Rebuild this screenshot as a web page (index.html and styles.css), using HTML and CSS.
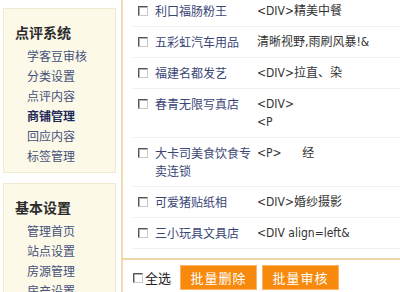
FILE: index.html
```html
<!DOCTYPE html>
<html lang="zh-CN">
<head>
    <meta charset="UTF-8">
    <title>商铺管理</title>
    <link rel="stylesheet" href="styles.css">
</head>
<body>
    <div class="admin">
        <div class="sidebar">
            <div class="menu-box">
                <h3>点评系统</h3>
                <ul>
                    <li><a href="#">学客豆审核</a></li>
                    <li><a href="#">分类设置</a></li>
                    <li><a href="#">点评内容</a></li>
                    <li><a href="#" class="current">商铺管理</a></li>
                    <li><a href="#">回应内容</a></li>
                    <li><a href="#">标签管理</a></li>
                </ul>
            </div>
            <div class="menu-box">
                <h3>基本设置</h3>
                <ul>
                    <li><a href="#">管理首页</a></li>
                    <li><a href="#">站点设置</a></li>
                    <li><a href="#">房源管理</a></li>
                    <li><a href="#">房产设置</a></li>
                </ul>
            </div>
        </div>

        <div class="main">
            <div class="shop-list">
                <div class="shop-row">
                    <span class="check"></span>
                    <span class="shop-name">利口福肠粉王</span>
                    <span class="shop-desc">&lt;DIV&gt;精美中餐</span>
                </div>
                <div class="shop-row">
                    <span class="check"></span>
                    <span class="shop-name">五彩虹汽车用品</span>
                    <span class="shop-desc">清晰视野,雨刷风暴!&amp;</span>
                </div>
                <div class="shop-row">
                    <span class="check"></span>
                    <span class="shop-name">福建名都发艺</span>
                    <span class="shop-desc">&lt;DIV&gt;拉直、染</span>
                </div>
                <div class="shop-row">
                    <span class="check"></span>
                    <span class="shop-name">春青无限写真店</span>
                    <span class="shop-desc">&lt;DIV&gt;<br>&lt;P</span>
                </div>
                <div class="shop-row">
                    <span class="check"></span>
                    <span class="shop-name">大卡司美食饮食专卖连锁</span>
                    <span class="shop-desc">&lt;P&gt;&nbsp;&nbsp;&nbsp;&nbsp;&nbsp;&nbsp;经</span>
                </div>
                <div class="shop-row">
                    <span class="check"></span>
                    <span class="shop-name">可爱猪贴纸相</span>
                    <span class="shop-desc">&lt;DIV&gt;婚纱摄影</span>
                </div>
                <div class="shop-row">
                    <span class="check"></span>
                    <span class="shop-name">三小玩具文具店</span>
                    <span class="shop-desc">&lt;DIV align=left&amp;</span>
                </div>
            </div>

            <div class="actions">
                <label class="select-all"><span class="check"></span>全选</label>
                <button type="button">批量删除</button>
                <button type="button">批量审核</button>
            </div>
        </div>
    </div>
</body>
</html>
```

FILE: styles.css
```css
* {
    margin: 0;
    padding: 0;
    box-sizing: border-box;
}

body {
    background: #fff;
    font-family: "Noto Sans CJK SC", sans-serif;
    font-size: 12px;
    color: #333;
    overflow: hidden;
}

.admin {
    display: flex;
    align-items: flex-start;
}

/* left menu */
.sidebar {
    width: 121px;
    flex-shrink: 0;
    padding: 8px 0 0 3px;
}

.menu-box {
    width: 113px;
    background: #fcf9e9;
    border: 1px solid #f1ead0;
    padding: 11px 0 6px;
    margin-bottom: 10px;
}

.menu-box h3 {
    font-size: 14px;
    line-height: 24px;
    font-weight: bold;
    color: #2b2b2b;
    padding-left: 11px;
    margin-bottom: 2px;
}

.menu-box ul {
    list-style: none;
}

.menu-box li {
    line-height: 20px;
    padding-left: 23px;
}

.menu-box a {
    color: #45527a;
    text-decoration: none;
}

.menu-box a.current {
    color: #1e2a58;
    font-weight: bold;
}

/* shop list */
.main {
    flex: 1;
    border-left: 2px solid #eedcb0;
    min-height: 292px;
}

.shop-list {
    margin: -4px 0 0 10px;
    padding-bottom: 9px;
}

.shop-row {
    display: grid;
    grid-template-columns: 22px 102px 1fr;
    align-items: start;
    padding: 6px 0;
    line-height: 18px;
    border-bottom: 1px solid #efefef;
}

.check {
    display: inline-block;
    width: 10px;
    height: 10px;
    margin: 4px 0 0 5px;
    background: #fff;
    border: 1px solid;
    border-color: #555 #c8c8c8 #c8c8c8 #555;
    box-shadow: inset 1px 1px 0 #b0b0b0;
}

.shop-name {
    color: #3a4676;
}

.shop-desc {
    font-family: "DejaVu Sans Condensed", "DejaVu Sans", "Noto Sans CJK SC", sans-serif;
    color: #333;
    white-space: nowrap;
}

/* bottom bar */
.actions {
    display: flex;
    align-items: center;
    border-top: 2px solid #ecd7a6;
    margin-left: -2px;
    padding: 5px 0 0 12px;
}

.select-all {
    display: flex;
    align-items: center;
    font-size: 13px;
    color: #222;
    margin-right: 4px;
}

.select-all .check {
    margin: 0 2px 0 0;
}

.actions button {
    width: 77px;
    height: 25px;
    margin-left: 5px;
    background: #f7890c;
    border: 1px solid #fbb56a;
    color: #fff;
    font-family: "Noto Sans CJK SC", sans-serif;
    font-size: 13px;
    letter-spacing: 1px;
    cursor: pointer;
}
```
